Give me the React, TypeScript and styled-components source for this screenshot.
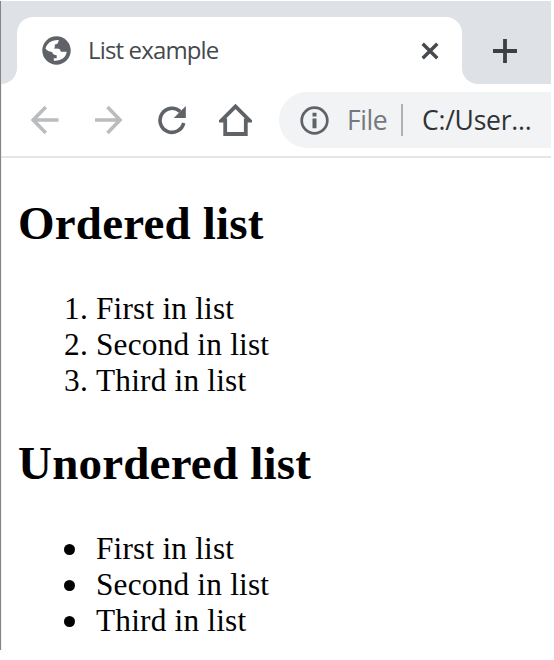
import React from "react";
import styled, { createGlobalStyle } from "styled-components";

const GlobalStyle = createGlobalStyle`
  * { box-sizing: border-box; }
  body { margin: 0; background: #fff; overflow: hidden; }
`;

const Window = styled.main`
  width: 551px;
  height: 649px;
  margin-top: 1px;
  border-left: 1px solid #858585;
  box-shadow: inset 1px 0 #f0f0f0;
  background: #fff;
  overflow: hidden;
`;

const TabStrip = styled.header`
  display: flex;
  height: 83px;
  padding-top: 16px;
  background: #dee1e6;
`;

const Shoulder = styled.div<{ $side: "left" | "right" }>`
  width: 16px;
  height: 67px;
  flex: none;
  background: linear-gradient(#fff, #fff) bottom / 100% 16px no-repeat;

  &::before {
    content: "";
    display: block;
    width: 16px;
    height: 67px;
    background: #dee1e6;
    border-radius: ${(p) => (p.$side === "left" ? "0 0 16px 0" : "0 0 0 16px")};
  }
`;

const Tab = styled.div`
  display: flex;
  align-items: center;
  width: 445px;
  height: 67px;
  padding: 0 23px 0 25px;
  border-radius: 16px 16px 0 0;
  background: #fff;
`;

const TabTitle = styled.span`
  flex: 1;
  margin: -2px 0 0 17px;
  font: 24px/32px "Open Sans", "Noto Sans", sans-serif;
  letter-spacing: -0.85px;
  color: #45494d;
  white-space: nowrap;
`;

const NewTab = styled.button`
  display: flex;
  padding: 0;
  margin: 21px 0 0 14px;
  height: 26px;
  border: 0;
  background: none;
`;

const Toolbar = styled.nav`
  display: flex;
  align-items: center;
  height: 74px;
  padding: 0 0 0 29px;
  border-bottom: 2px solid #e4e5e5;
`;

const NavButton = styled.button<{ $gap: number }>`
  display: flex;
  flex: none;
  padding: 0;
  margin-right: ${(p) => p.$gap}px;
  border: 0;
  background: none;
`;

const Address = styled.div`
  display: flex;
  align-items: center;
  flex: 1;
  height: 56px;
  padding-left: 21px;
  border-radius: 28px 0 0 28px;
  background: #f1f3f4;
  font: 26.5px/36px "Open Sans", "Noto Sans", sans-serif;
  white-space: nowrap;
`;

const Scheme = styled.span`
  width: 54px;
  margin-left: 18px;
  letter-spacing: -0.4px;
  color: #75797e;
`;

const Divider = styled.i`
  width: 2px;
  height: 32px;
  background: #aeb1b4;
`;

const Path = styled.span`
  margin-left: 19px;
  letter-spacing: -0.25px;
  color: #303236;
`;

const Page = styled.article`
  padding: 38px 17px 0;
  font: 31.3px/36px "Liberation Serif", "Times New Roman", serif;
  letter-spacing: 0.2px;
  color: #000;
`;

const Heading = styled.h2`
  margin: 0;
  font-size: 47px;
  line-height: 54px;
  font-weight: 700;
`;

const listStyles = `
  margin: 41px 0 37px;
  padding: 0 0 0 78px;
`;

const Ordered = styled.ol`${listStyles}`;

const Unordered = styled.ul`
  ${listStyles}
  padding-left: 46px;
  list-style: none;

  li {
    display: flex;
    align-items: center;
  }

  li::before {
    content: "";
    width: 11px;
    height: 11px;
    margin: 0 21px 0 0;
    border-radius: 50%;
    background: #000;
  }
`;

const items = ["First in list", "Second in list", "Third in list"];

const Globe = () => (
  <svg width="29" height="29" viewBox="0 0 29 29">
    <circle cx="14.5" cy="14.5" r="14.2" fill="#5f6368" />
    <path
      fill="#fff"
      d="M3.5 12.8C4.5 8 9 3.8 16.8 4.1L16 6.7Q15.5 8.2 12.8 8.5V11Q12.8 12.3 11.5 12.4L16.7 12.8Q18.7 13.2 18.7 15.8H24.7C24 21.5 19 25.2 11.8 24.7V22.2H14.7V19.2Q10.6 18.8 10.3 16.2L8.8 15.8Q6 15.8 3.5 12.8Z"
    />
  </svg>
);

const Arrow = ({ flip }: { flip?: boolean }) => (
  <svg width="30" height="30" viewBox="0 0 30 30" fill="none" stroke="#bbbcbd" strokeWidth="3.6">
    <path d={flip ? "M1 15H26M13.5 2L26 15L13.5 28" : "M28.5 15H3.2M15.8 2L3.2 15L15.8 28"} />
  </svg>
);

const Reload = () => (
  <svg width="30" height="30" viewBox="0 0 30 30">
    <path d="M26.7 18A12 12 0 1 1 23.3 6.6" fill="none" stroke="#5f6368" strokeWidth="3.6" />
    <path d="M28.8 1V13H16.8Z" fill="#5f6368" />
  </svg>
);

const Home = () => (
  <svg width="33" height="34" viewBox="0 0 33 34" fill="none" stroke="#5f6368" strokeWidth="3.8">
    <path d="M2.5 17.5H6.2V31H26.8V17.5H30.5L16.5 3.4Z" />
  </svg>
);

const Info = () => (
  <svg width="29" height="29" viewBox="0 0 29 29">
    <circle cx="14.5" cy="14.5" r="12.8" fill="none" stroke="#5f6368" strokeWidth="2.7" />
    <path d="M14.5 6.8V10.4M14.5 12.6V22.2" stroke="#5f6368" strokeWidth="4" />
  </svg>
);

export default function App() {
  return (
    <>
      <GlobalStyle />
      <Window>
        <TabStrip>
          <Shoulder $side="left" />
          <Tab>
            <Globe />
            <TabTitle>List example</TabTitle>
            <svg width="18" height="18" viewBox="0 0 18 18" stroke="#45494d" strokeWidth="3.4">
              <path d="M1.7 1.7L16.3 16.3M16.3 1.7L1.7 16.3" />
            </svg>
          </Tab>
          <Shoulder $side="right" />
          <NewTab aria-label="New tab">
            <svg width="26" height="26" viewBox="0 0 26 26" stroke="#3c4043" strokeWidth="3.8">
              <path d="M1 13H25M13 1V25" />
            </svg>
          </NewTab>
        </TabStrip>
        <Toolbar>
          <NavButton $gap={34} aria-label="Back"><Arrow /></NavButton>
          <NavButton $gap={33} aria-label="Forward"><Arrow flip /></NavButton>
          <NavButton $gap={32} aria-label="Reload"><Reload /></NavButton>
          <NavButton $gap={27} aria-label="Home"><Home /></NavButton>
          <Address>
            <Info />
            <Scheme>File</Scheme>
            <Divider />
            <Path>C:/User...</Path>
          </Address>
        </Toolbar>
        <Page>
          <Heading>Ordered list</Heading>
          <Ordered>{items.map((item) => <li key={item}>{item}</li>)}</Ordered>
          <Heading>Unordered list</Heading>
          <Unordered>{items.map((item) => <li key={item}>{item}</li>)}</Unordered>
        </Page>
      </Window>
    </>
  );
}
